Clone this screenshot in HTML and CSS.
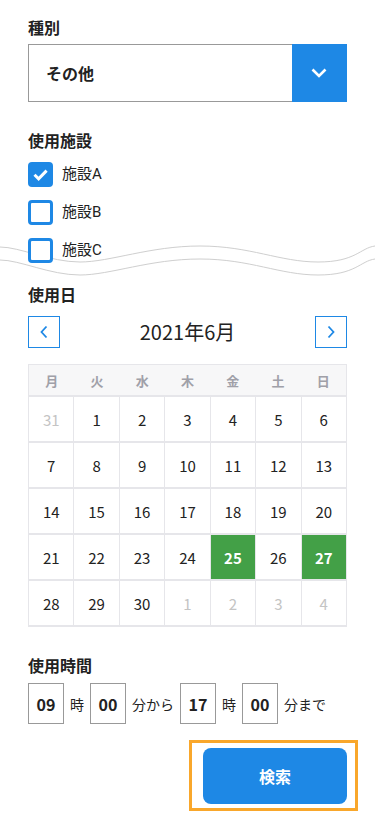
FILE: index.html
```html
<!DOCTYPE html>
<html lang="ja">
<head>
<meta charset="utf-8">
<link rel="stylesheet" href="styles.css">
</head>
<body>
<main class="page">
  <section class="field">
    <h2 class="label">種別</h2>
    <div class="select">
      <span class="select-value">その他</span>
      <span class="select-btn">
        <svg width="16" height="10" viewBox="0 0 16 10"><path d="M1.5 1.5 L8 8 L14.5 1.5" fill="none" stroke="#fff" stroke-width="2.6"/></svg>
      </span>
    </div>
  </section>

  <section class="field facilities">
    <h2 class="label">使用施設</h2>
    <ul class="checks">
      <li class="check"><span class="box on"><svg width="25" height="25" viewBox="0 0 25 25"><path d="M6.5 12.8 L10.6 16.8 L18.6 8.6" fill="none" stroke="#fff" stroke-width="3"/></svg></span><span class="check-text">施設A</span></li>
      <li class="check"><span class="box"></span><span class="check-text">施設B</span></li>
      <li class="check"><span class="box"></span><span class="check-text">施設C</span></li>
    </ul>
    <div class="wave">
      <svg width="375" height="39" viewBox="0 0 375 39">
        <path d="M0 4 C 20 4, 50 19, 80 19 S 150 3, 200 3 S 280 19, 318 19 S 360 5, 375 3 L375 39 L0 39 Z" fill="#fff" stroke="none"/>
        <path d="M0 4 C 20 4, 50 19, 80 19 S 150 3, 200 3 S 280 19, 318 19 S 360 5, 375 3" fill="none" stroke="#cfcfcf" stroke-width="1"/>
        <path d="M0 17 C 20 17, 50 32, 80 32 S 150 16, 200 16 S 280 32, 318 32 S 360 18, 375 16" fill="none" stroke="#cfcfcf" stroke-width="1"/>
      </svg>
    </div>
  </section>

  <section class="field date">
    <h2 class="label">使用日</h2>
    <div class="month-nav">
      <button class="nav-btn" aria-label="前月"><svg width="10" height="14" viewBox="0 0 10 14"><path d="M7.5 1.5 L2.5 7 L7.5 12.5" fill="none" stroke="#1e88e5" stroke-width="1.8"/></svg></button>
      <span class="month">2021年6月</span>
      <button class="nav-btn" aria-label="翌月"><svg width="10" height="14" viewBox="0 0 10 14"><path d="M2.5 1.5 L7.5 7 L2.5 12.5" fill="none" stroke="#1e88e5" stroke-width="1.8"/></svg></button>
    </div>
    <div class="cal">
      <div class="cal-head">
        <span>月</span><span>火</span><span>水</span><span>木</span><span>金</span><span>土</span><span>日</span>
      </div>
      <div class="cal-days">
        <span class="off">31</span><span>1</span><span>2</span><span>3</span><span>4</span><span>5</span><span>6</span>
        <span>7</span><span>8</span><span>9</span><span>10</span><span>11</span><span>12</span><span>13</span>
        <span>14</span><span>15</span><span>16</span><span>17</span><span>18</span><span>19</span><span>20</span>
        <span>21</span><span>22</span><span>23</span><span>24</span><span class="sel">25</span><span>26</span><span class="sel">27</span>
        <span>28</span><span>29</span><span>30</span><span class="off">1</span><span class="off">2</span><span class="off">3</span><span class="off">4</span>
      </div>
    </div>
  </section>

  <section class="field time">
    <h2 class="label">使用時間</h2>
    <div class="time-row">
      <span class="tbox">09</span><span class="tunit">時</span>
      <span class="tbox">00</span><span class="tunit">分から</span>
      <span class="tbox">17</span><span class="tunit">時</span>
      <span class="tbox">00</span><span class="tunit">分まで</span>
    </div>
  </section>

  <div class="actions">
    <div class="focus-ring">
      <button class="search">検索</button>
    </div>
  </div>
</main>
</body>
</html>
```
FILE: styles.css
```css
* { box-sizing: border-box; }
html, body { margin: 0; padding: 0; background: #fff; }
body {
  font-family: "Noto Sans CJK JP", "Noto Sans", sans-serif;
  color: #222;
  width: 375px;
  height: 820px;
  overflow: hidden;
}
.page { padding: 15px 28px 0; }
.label {
  margin: 0;
  font-size: 16px;
  font-weight: 700;
  line-height: 24px;
  color: #222;
}
.select {
  margin-top: 5px;
  height: 58px;
  display: flex;
  border: 1px solid #999;
  border-right: 0;
}
.select-value {
  flex: 1;
  display: flex;
  align-items: center;
  padding-left: 17px;
  font-size: 16px;
  font-weight: 700;
}
.select-btn {
  width: 55px;
  margin: -1px 0;
  background: #1e88e5;
  display: flex;
  align-items: center;
  justify-content: center;
}
.select-btn svg { margin-left: -2px; }
.facilities { margin-top: 26px; }
.checks {
  list-style: none;
  margin: 10px 0 0;
  padding: 0;
  display: flex;
  flex-direction: column;
  gap: 13px;
}
.check {
  display: flex;
  align-items: center;
  gap: 9px;
  height: 25px;
  font-size: 15px;
  line-height: 25px;
}
.check-text {
  font-family: Roboto, "Noto Sans CJK JP", sans-serif;
  font-size: 15px;
}
.box {
  position: relative;
  z-index: 2;
  width: 25px;
  height: 25px;
  border: 3px solid #1e88e5;
  border-radius: 4px;
  background: #fff;
  display: block;
}
.box.on { background: #1e88e5; border: 0; }
.box.on svg { display: block; }
.wave {
  position: relative;
  z-index: 1;
  margin: -20px -28px 0;
  height: 39px;
}
.wave svg { display: block; }
.month-nav {
  margin-top: 10px;
  display: flex;
  align-items: center;
  justify-content: space-between;
  height: 32px;
}
.nav-btn {
  width: 32px;
  height: 32px;
  border: 1px solid #1e88e5;
  background: #fff;
  padding: 0;
  display: flex;
  align-items: center;
  justify-content: center;
}
.month {
  font-size: 20px;
  line-height: 32px;
  color: #222;
}
.cal {
  margin-top: 16px;
  border: 1px solid #e6e6ea;
  border-bottom-width: 2px;
  background: #e6e6ea;
}
.cal-head {
  display: grid;
  grid-template-columns: repeat(7, 1fr);
  height: 30px;
  background: #f7f7f8;
}
.cal-head span {
  display: flex;
  align-items: center;
  justify-content: center;
  font-size: 13px;
  font-weight: 700;
  color: #a0a0a8;
}
.cal-days {
  margin-top: 2px;
  display: grid;
  grid-template-columns: repeat(7, 1fr);
  column-gap: 1px;
  row-gap: 2px;
}
.cal-days span {
  height: 44px;
  background: #fff;
  display: flex;
  align-items: center;
  justify-content: center;
  font-size: 15px;
  color: #222;
}
.cal-days .off { color: #c4c4c4; }
.cal-days .sel { background: #43a047; color: #fff; font-weight: 700; }
.time { margin-top: 26px; }
.time-row {
  margin-top: 6px;
  display: flex;
  align-items: center;
  gap: 6px;
}
.tbox {
  width: 36px;
  height: 41px;
  border: 1px solid #999;
  display: flex;
  align-items: center;
  justify-content: center;
  font-size: 16px;
  font-weight: 700;
}
.tunit { font-size: 14px; }
.actions {
  margin-top: 16px;
  display: flex;
  justify-content: flex-end;
  margin-right: -11px;
}
.focus-ring {
  border: 3px solid #f9a72b;
  padding: 5px 8px 4px 11px;
}
.search {
  width: 144px;
  height: 56px;
  border: 0;
  border-radius: 8px;
  background: #1e88e5;
  color: #fff;
  font-family: inherit;
  font-size: 16px;
  font-weight: 700;
  display: block;
}
```
